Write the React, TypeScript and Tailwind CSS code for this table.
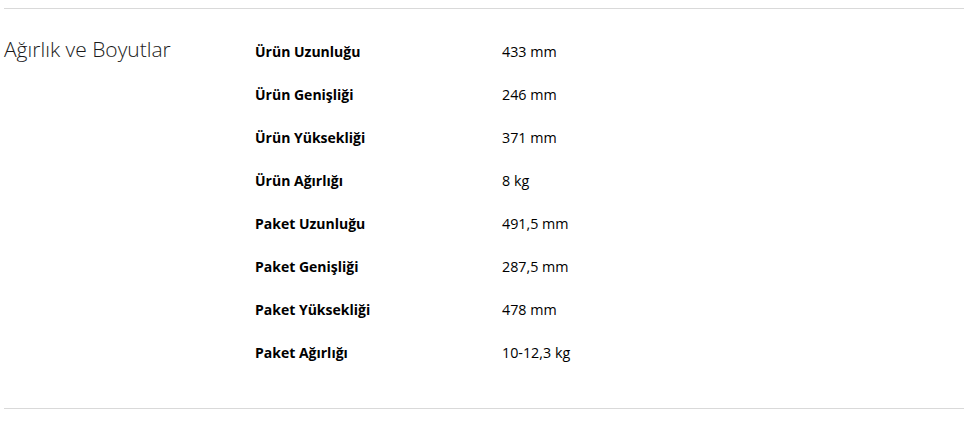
const rows: [string, string][] = [
  ["Ürün Uzunluğu", "433 mm"],
  ["Ürün Genişliği", "246 mm"],
  ["Ürün Yüksekliği", "371 mm"],
  ["Ürün Ağırlığı", "8 kg"],
  ["Paket Uzunluğu", "491,5 mm"],
  ["Paket Genişliği", "287,5 mm"],
  ["Paket Yüksekliği", "478 mm"],
  ["Paket Ağırlığı", "10-12,3 kg"],
];

export default function App() {
  return (
    <main className="min-h-screen bg-white pt-2 pl-1 font-['Open_Sans',sans-serif] text-black">
      <section className="w-[960px] border-t border-b border-[#d9d9d9]">
        <div className="flex pt-[21px] pb-[34px]">
          <h2 className="w-[251px] pt-[5px] text-[21px] leading-[28px] font-light text-[#1a1a1a]">
            Ağırlık ve Boyutlar
          </h2>
          <div className="flex flex-col">
            {rows.map(([label, value]) => (
              <div key={label} className="flex h-[43px] items-center text-[14px]">
                <span className="w-[247px] font-bold">{label}</span>
                <span className="text-[14.3px]">{value}</span>
              </div>
            ))}
          </div>
        </div>
      </section>
    </main>
  );
}
